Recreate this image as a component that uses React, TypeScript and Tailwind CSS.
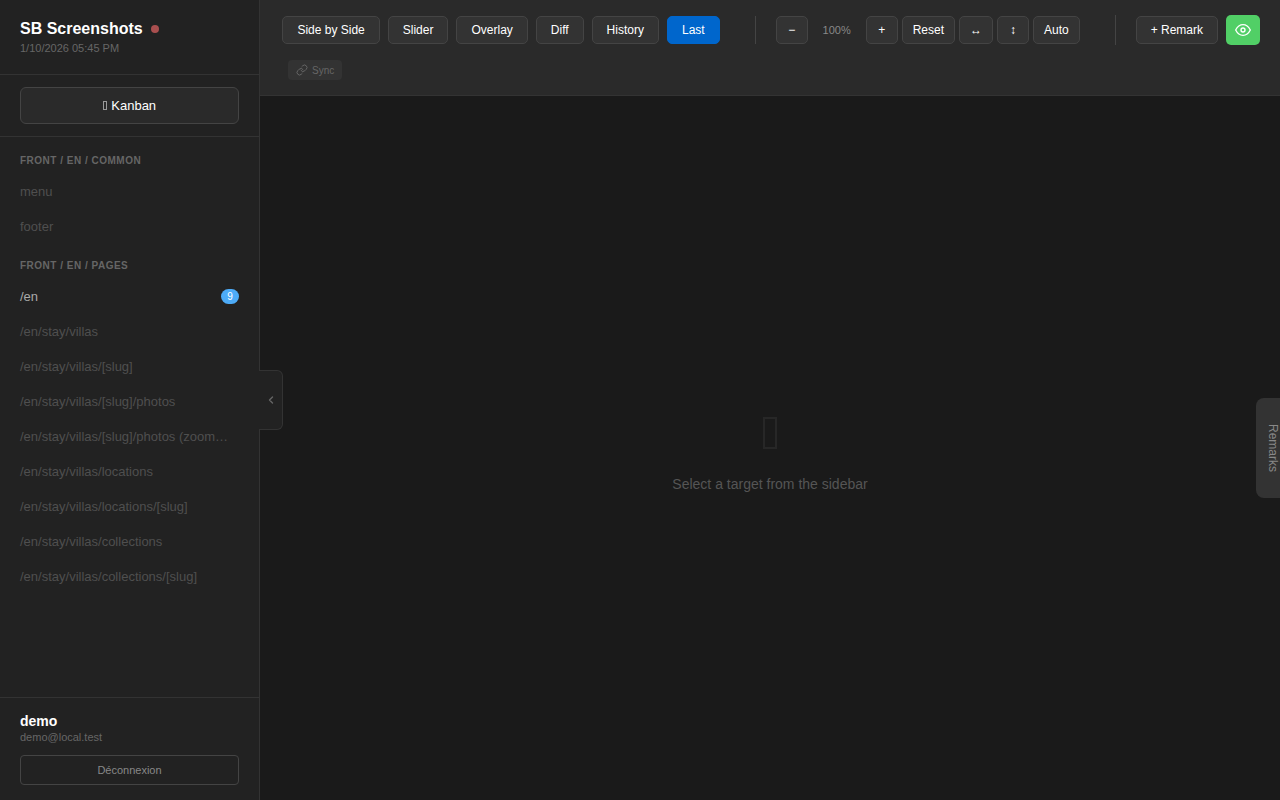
import type { ReactNode } from 'react';
import { ChevronLeft, Link } from 'lucide-react';

type Group = { title: string; items: { name: string; count?: number }[] };

const groups: Group[] = [
  { title: 'FRONT / EN / COMMON', items: [{ name: 'menu' }, { name: 'footer' }] },
  {
    title: 'FRONT / EN / PAGES',
    items: [
      { name: '/en', count: 9 },
      { name: '/en/stay/villas' },
      { name: '/en/stay/villas/[slug]' },
      { name: '/en/stay/villas/[slug]/photos' },
      { name: '/en/stay/villas/[slug]/photos (zoom…' },
      { name: '/en/stay/villas/locations' },
      { name: '/en/stay/villas/locations/[slug]' },
      { name: '/en/stay/villas/collections' },
      { name: '/en/stay/villas/collections/[slug]' },
    ],
  },
];

const modes = ['Side by Side', 'Slider', 'Overlay', 'Diff', 'History', 'Last'];

const gray = 'border-[#444] bg-[#333]';

function ToolButton({ children, className }: { children: ReactNode; className: string }) {
  return (
    <button className={`flex h-7 shrink-0 items-center justify-center whitespace-nowrap rounded-[5px] border text-xs text-white ${className}`}>
      {children}
    </button>
  );
}

function EyeIcon() {
  return (
    <svg width="16" height="16" viewBox="0 0 24 24" fill="none" stroke="currentColor" strokeWidth="2" strokeLinecap="round" strokeLinejoin="round">
      <path d="M1 12s4-8 11-8 11 8 11 8-4 8-11 8-11-8-11-8z" />
      <circle cx="12" cy="12" r="3" />
    </svg>
  );
}

function Sidebar() {
  return (
    <aside className="relative flex w-[260px] shrink-0 flex-col border-r border-[#333] bg-[#222]">
      <div className="h-[75px] shrink-0 border-b border-[#333] px-5 pt-5">
        <div className="flex items-center gap-2">
          <h1 className="text-base leading-[18px] font-semibold text-white">SB Screenshots</h1>
          <span className="size-2 rounded-full bg-[#a94f4f]" />
        </div>
        <p className="mt-1 text-[11px] leading-3 text-[#666]">1/10/2026 05:45 PM</p>
      </div>
      <div className="h-[62px] shrink-0 border-b border-[#333] px-5 py-3">
        <button className="flex h-[37px] w-full items-center justify-center gap-[4.4px] rounded-md border border-[#444] bg-[#2a2a2a] text-[13px] text-white">
          <span className="h-[9px] w-1 border border-[#999]" />
          Kanban
        </button>
      </div>
      <nav className="flex-1 overflow-hidden pt-[10px]">
        {groups.map((group) => (
          <section key={group.title}>
            <h2 className="h-[27px] px-5 pt-2 text-[10px] leading-[11px] font-semibold tracking-[0.5px] text-[#666]">{group.title}</h2>
            <ul className="pb-2">
              {group.items.map((item) => (
                <li key={item.name} className="flex h-[35px] items-center justify-between px-5 text-[13px]">
                  <span className={`whitespace-nowrap ${item.count ? 'text-[#aaa]' : 'text-[#4f4f4f]'}`}>{item.name}</span>
                  {item.count && (
                    <span className="flex h-[15px] w-[18px] shrink-0 items-center justify-center rounded-[10px] bg-[#4dabf7] text-[10px] text-white">
                      {item.count}
                    </span>
                  )}
                </li>
              ))}
            </ul>
          </section>
        ))}
      </nav>
      <div className="h-[103px] shrink-0 border-t border-[#333] px-5 pt-[15px]">
        <p className="text-sm leading-4 font-semibold text-white">demo</p>
        <p className="mt-0.5 text-[11px] leading-3 text-[#666]">demo@local.test</p>
        <button className="mt-3 flex h-[30px] w-full items-center justify-center rounded border border-[#444] text-[11px] text-[#888]">
          Déconnexion
        </button>
      </div>
      <button className="absolute top-[370px] -right-6 flex h-[60px] w-6 items-center justify-center rounded-r-md border border-l-0 border-[#333] bg-[#222] text-[#666]">
        <ChevronLeft size={12} strokeWidth={2.75} />
      </button>
    </aside>
  );
}

function Toolbar() {
  return (
    <header className="h-24 shrink-0 border-b border-[#333] bg-[#2a2a2a] pt-[15px] pr-5 pl-[22.4px]">
      <div className="flex h-[30px] items-center">
        <div className="flex gap-2">
          {modes.map((mode) => (
            <ToolButton key={mode} className={`px-3.5 ${mode === 'Last' ? 'border-[#0066cc] bg-[#0066cc]' : gray}`}>
              {mode}
            </ToolButton>
          ))}
        </div>
        <div className="ml-[35px] flex h-7 items-center gap-1 border-l border-[#444] pl-5">
          <ToolButton className={`w-8 ${gray}`}>−</ToolButton>
          <span className="w-[50px] text-center text-[11px] text-[#888]">100%</span>
          <ToolButton className={`w-8 ${gray}`}>+</ToolButton>
          <ToolButton className={`px-2.5 ${gray}`}>Reset</ToolButton>
          <ToolButton className={`px-2.5 ${gray}`}>↔</ToolButton>
          <ToolButton className={`w-8 ${gray}`}>↕</ToolButton>
          <ToolButton className={`px-2.5 ${gray}`}>Auto</ToolButton>
        </div>
        <div className="ml-auto flex h-[30px] items-center gap-2 border-l border-[#444] pl-5">
          <ToolButton className={`px-3.5 ${gray}`}>+ Remark</ToolButton>
          <button className="flex h-[30px] w-[34px] items-center justify-center rounded-[5px] bg-[#51cf66] text-white">
            <EyeIcon />
          </button>
        </div>
      </div>
      <button className="mt-[15px] ml-[5.6px] flex h-5 w-[54px] items-center gap-1 rounded bg-[#333] pl-2 text-[10px] text-[#666]">
        <Link size={12} />
        Sync
      </button>
    </header>
  );
}

export default function App() {
  return (
    <div className="relative flex h-screen w-full overflow-hidden bg-[#1a1a1a] font-['Liberation_Sans',Arial,sans-serif]">
      <Sidebar />
      <div className="flex min-w-0 flex-1 flex-col">
        <Toolbar />
        <main className="flex flex-1 flex-col items-center pt-[321px]">
          <span className="h-8 w-3.5 border-2 border-[#272727]" />
          <p className="mt-[27px] text-sm leading-4 text-[#555]">Select a target from the sidebar</p>
        </main>
      </div>
      <button className="absolute top-[398px] right-0 flex h-[100px] w-6 items-center justify-center rounded-l-lg bg-[#333] pl-2.5 text-xs text-[#888] [writing-mode:vertical-rl]">
        Remarks
      </button>
    </div>
  );
}
